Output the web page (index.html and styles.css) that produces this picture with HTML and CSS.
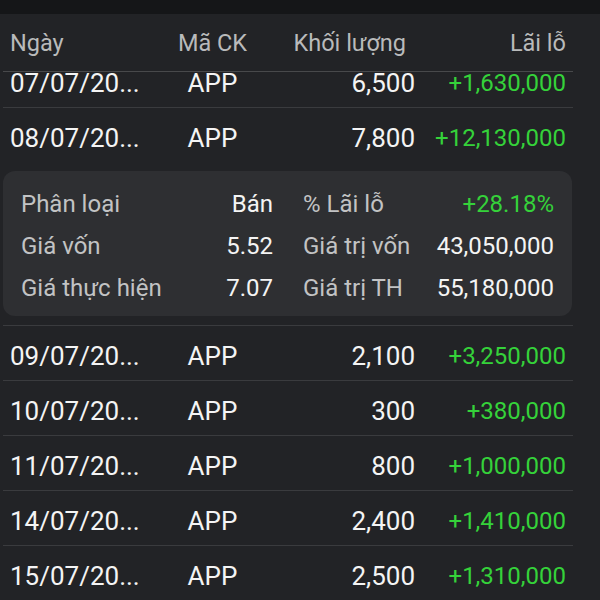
FILE: index.html
```html
<!DOCTYPE html>
<html lang="vi">
<head>
<meta charset="utf-8">
<link rel="stylesheet" href="styles.css">
</head>
<body>
<div class="topbar"></div>
<div class="head grid">
  <div class="c1">Ngày</div>
  <div class="c2">Mã CK</div>
  <div class="c3 hvol">Khối lượng</div>
  <div class="c4">Lãi lỗ</div>
</div>
<div class="viewport">
  <div class="list">
    <div class="row grid"><div class="c1">07/07/20...</div><div class="c2">APP</div><div class="c3">6,500</div><div class="c4 pos">+1,630,000</div></div>
    <div class="expanded">
      <div class="row grid"><div class="c1">08/07/20...</div><div class="c2">APP</div><div class="c3">7,800</div><div class="c4 pos">+12,130,000</div></div>
      <div class="card">
        <div class="pair"><span class="lbl">Phân loại</span><span class="val">Bán</span></div>
        <div class="pair"><span class="lbl">% Lãi lỗ</span><span class="val pos">+28.18%</span></div>
        <div class="pair"><span class="lbl">Giá vốn</span><span class="val">5.52</span></div>
        <div class="pair"><span class="lbl">Giá trị vốn</span><span class="val">43,050,000</span></div>
        <div class="pair"><span class="lbl">Giá thực hiện</span><span class="val">7.07</span></div>
        <div class="pair"><span class="lbl">Giá trị TH</span><span class="val">55,180,000</span></div>
      </div>
    </div>
    <div class="row grid"><div class="c1">09/07/20...</div><div class="c2">APP</div><div class="c3">2,100</div><div class="c4 pos">+3,250,000</div></div>
    <div class="row grid"><div class="c1">10/07/20...</div><div class="c2">APP</div><div class="c3">300</div><div class="c4 pos">+380,000</div></div>
    <div class="row grid"><div class="c1">11/07/20...</div><div class="c2">APP</div><div class="c3">800</div><div class="c4 pos">+1,000,000</div></div>
    <div class="row grid"><div class="c1">14/07/20...</div><div class="c2">APP</div><div class="c3">2,400</div><div class="c4 pos">+1,410,000</div></div>
    <div class="row grid"><div class="c1">15/07/20...</div><div class="c2">APP</div><div class="c3">2,500</div><div class="c4 pos">+1,310,000</div></div>
  </div>
</div>
</body>
</html>
```
FILE: styles.css
```css
html, body {
  margin: 0;
  padding: 0;
  height: 600px;
  overflow: hidden;
  background: #222326;
  font-family: Roboto, "Noto Sans", sans-serif;
  color: #f4f4f4;
}
.topbar {
  height: 14px;
  background: #151618;
}
.grid {
  display: grid;
  grid-template-columns: 160px 85px 160px 1fr;
  margin: 0 27px 0 3px;
  padding: 0 7px;
  white-space: nowrap;
}
.c1 { text-align: left; }
.c2 { text-align: center; }
.c3 { text-align: right; }
.c4 { text-align: right; }
.head {
  height: 55px;
  padding-top: 2px;
  line-height: 55px;
  font-size: 23.5px;
  color: #b9babb;
  border-bottom: 1px solid #48494b;
  position: relative;
  z-index: 1;
  background: #222326;
}
.hvol { padding-right: 9px; }
.viewport {
  height: 528px;
  overflow: hidden;
}
.list {
  margin-top: -19px;
}
.row {
  height: 48px;
  padding-top: 6px;
  line-height: 48px;
  font-size: 26px;
  border-bottom: 1px solid #3a3b3e;
}
.row .c4 { font-size: 24px; }
.expanded {
  border-bottom: 1px solid #3a3b3e;
  margin: 0 27px 0 3px;
}
.expanded .row {
  margin: 0;
  border-bottom: none;
}
.card {
  margin: 9px 1px 9px 0;
  background: #2e2f32;
  border-radius: 12px;
  padding: 12px 18px 7px;
  display: grid;
  grid-template-columns: 252px 251px;
  column-gap: 30px;
  font-size: 24px;
  line-height: 42px;
}
.pair {
  display: flex;
  justify-content: space-between;
  white-space: nowrap;
}
.lbl { color: #c2c3c4; }
.val { color: #f4f4f4; }
.pos, .val.pos { color: #35d23a; }
```
